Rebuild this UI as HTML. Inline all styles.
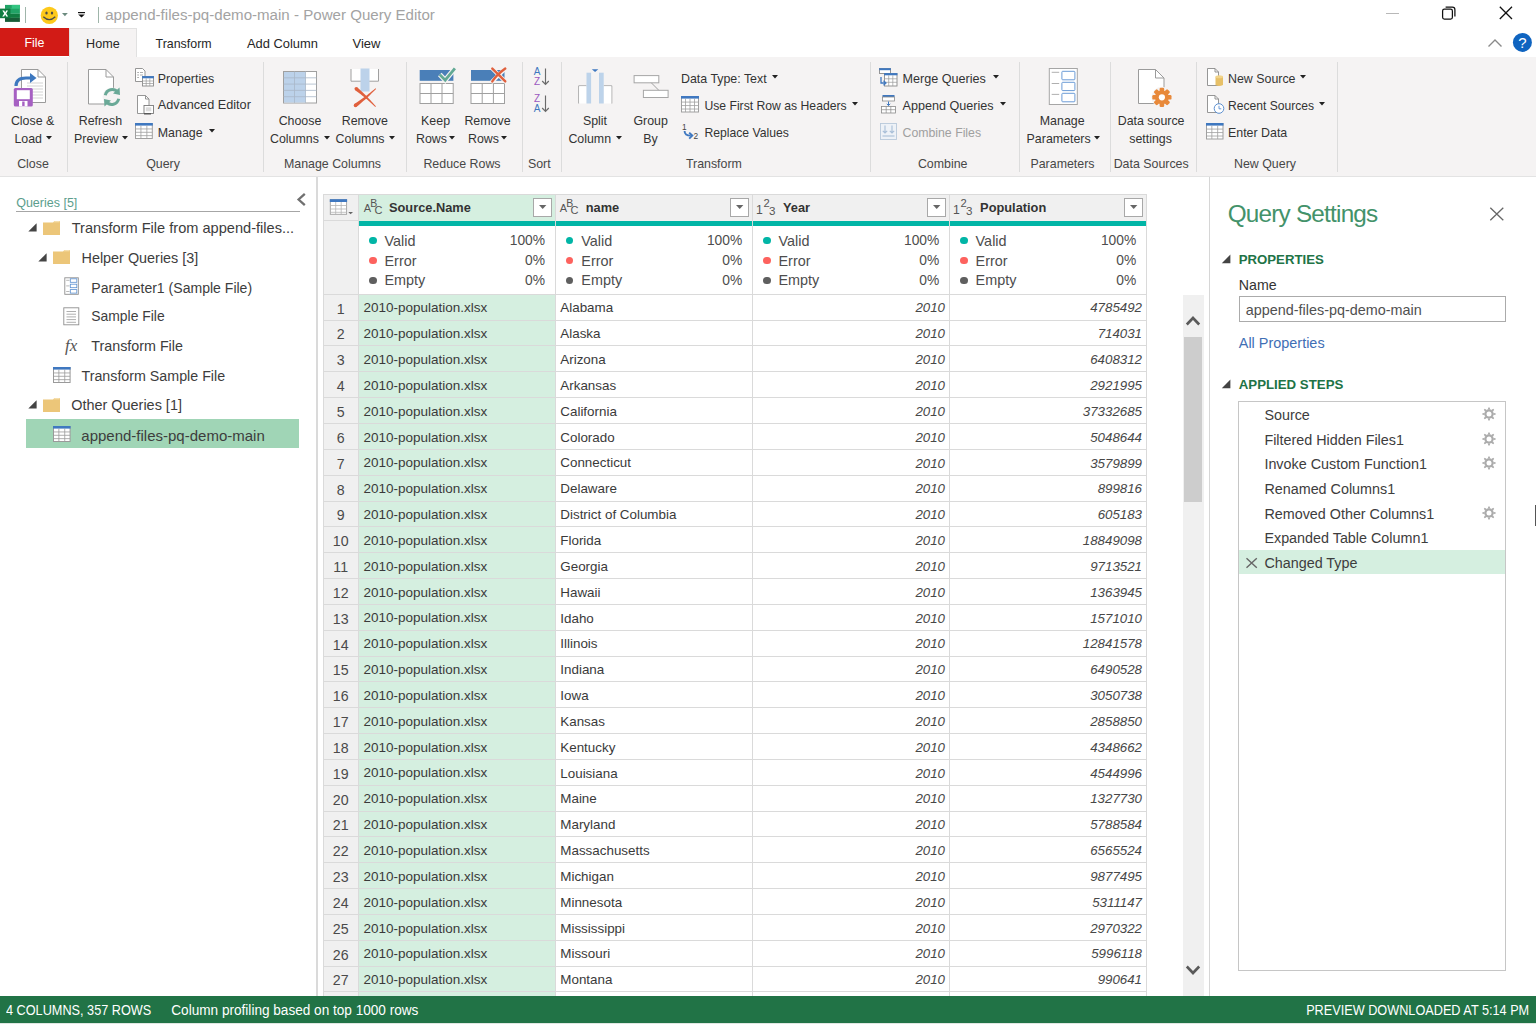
<!DOCTYPE html>
<html><head><meta charset="utf-8"><title>Power Query Editor</title>
<style>
html,body{margin:0;padding:0;width:1536px;height:1024px;overflow:hidden;background:#fff;}
body{position:relative;font-family:"Liberation Sans",sans-serif;}
.t{position:absolute;white-space:nowrap;line-height:1;}
.r{position:absolute;}
svg.r{overflow:visible;}
</style></head><body>
<div class="r" style="left:0px;top:0px;width:1536px;height:28px;background:#ffffff;"></div>
<svg class="r" style="left:0px;top:4px;" width="22" height="20" viewBox="0 0 22 20">
<rect x="5" y="0.9" width="14.9" height="4" fill="#21a366"/>
<rect x="11.7" y="0.9" width="8.2" height="4" fill="#33c481"/>
<rect x="5" y="4.8" width="14.9" height="5" fill="#21a366"/>
<rect x="5" y="9.8" width="14.9" height="4.1" fill="#107c41"/>
<rect x="5" y="13.9" width="14.9" height="4" fill="#185c37"/>
<rect x="0" y="4.6" width="10.5" height="9.6" fill="#107c41"/>
<path d="M2.3 6.4 L4.2 6.4 L5.2 8.4 L6.2 6.4 L8 6.4 L6.2 9.4 L8.1 12.5 L6.2 12.5 L5.2 10.5 L4.1 12.5 L2.2 12.5 L4.2 9.4 Z" fill="#fff"/>
</svg>
<div class="r" style="left:25px;top:6.5px;width:1.2px;height:16.5px;background:#9fb5aa;"></div>
<svg class="r" style="left:40px;top:6px;" width="20" height="20" viewBox="0 0 20 20">
<circle cx="9.3" cy="9.4" r="8.6" fill="#fdc91b"/>
<ellipse cx="6.5" cy="6.9" rx="1.2" ry="1.5" fill="#4a4a4a"/>
<ellipse cx="12" cy="6.9" rx="1.2" ry="1.5" fill="#4a4a4a"/>
<path d="M3.3 10.8 Q9.3 16.5 15.3 10.8" stroke="#4a4a4a" stroke-width="1.3" fill="none"/>
</svg>
<svg class="r" style="left:62.3px;top:12.9px;" width="5.8" height="3.2" viewBox="0 0 5.8 3.2"><path d="M0 0H5.8L2.9 3.2Z" fill="#6b8a7e"/></svg>
<svg class="r" style="left:77px;top:11px;" width="10" height="8" viewBox="0 0 10 8"><rect x="1" y="1" width="7" height="1.2" fill="#111"/><path d="M1.2 3.5H7.8L4.5 6.6Z" fill="#111"/></svg>
<div class="r" style="left:98px;top:6.5px;width:1.2px;height:16.5px;background:#9fb5aa;"></div>
<div class="t" style="left:105.20px;top:6.95px;font-size:15.1px;color:#a3a3a3;font-weight:normal;font-style:normal;">append-files-pq-demo-main - Power Query Editor</div>
<div class="r" style="left:1386px;top:12.6px;width:13px;height:1.2px;background:#b8b8b8;"></div>
<svg class="r" style="left:1441px;top:5px;" width="16" height="16" viewBox="0 0 16 16"><rect x="1.6" y="4.2" width="9.8" height="9.8" rx="1.8" fill="none" stroke="#111" stroke-width="1.25"/><path d="M4.6 2.2 H11.4 Q13.9 2.2 13.9 4.7 V11.4" fill="none" stroke="#111" stroke-width="1.25"/></svg>
<svg class="r" style="left:1498px;top:5px;" width="16" height="16" viewBox="0 0 16 16"><path d="M1.8 1.8 L14 14 M14 1.8 L1.8 14" stroke="#111" stroke-width="1.3"/></svg>
<div class="r" style="left:0px;top:28px;width:1536px;height:29px;background:#ffffff;"></div>
<div class="r" style="left:0px;top:56.5px;width:1536px;height:1px;background:#e1e1e1;"></div>
<div class="r" style="left:0px;top:28px;width:69px;height:28px;background:#d21b16;"></div>
<div class="t" style="left:4.50px;width:60px;text-align:center;top:37.30px;font-size:12.4px;color:#ffffff;font-weight:normal;font-style:normal;">File</div>
<div class="r" style="left:69px;top:28px;width:68px;height:30px;background:#f5f3f3;border:1px solid #e1e1e1;border-bottom:none;box-sizing:border-box"></div>
<div class="t" style="left:86.10px;top:37.50px;font-size:12.6px;color:#262626;font-weight:normal;font-style:normal;">Home</div>
<div class="t" style="left:155.60px;top:37.60px;font-size:12.4px;color:#262626;font-weight:normal;font-style:normal;">Transform</div>
<div class="t" style="left:247.00px;top:38.05px;font-size:12.9px;color:#262626;font-weight:normal;font-style:normal;">Add Column</div>
<div class="t" style="left:352.50px;top:36.80px;font-size:13px;color:#262626;font-weight:normal;font-style:normal;">View</div>
<svg class="r" style="left:1487px;top:38px;" width="16" height="10" viewBox="0 0 16 10"><path d="M1.5 8.5 L8 2 L14.5 8.5" stroke="#8a8a8a" stroke-width="1.4" fill="none"/></svg>
<svg class="r" style="left:1512px;top:32px;" width="21" height="21" viewBox="0 0 21 21"><circle cx="10.4" cy="10.4" r="9.5" fill="#0f64c0"/><text x="10.4" y="15.6" text-anchor="middle" font-family="Liberation Sans" font-size="15" fill="#fff">?</text></svg>
<div class="r" style="left:0px;top:57px;width:1536px;height:119px;background:#f5f3f3;"></div>
<div class="r" style="left:0px;top:175.5px;width:1536px;height:1px;background:#e3e3e3;"></div>
<div class="r" style="left:67px;top:61.5px;width:1px;height:110px;background:#dcdcdc;"></div>
<div class="r" style="left:263px;top:61.5px;width:1px;height:110px;background:#dcdcdc;"></div>
<div class="r" style="left:406px;top:61.5px;width:1px;height:110px;background:#dcdcdc;"></div>
<div class="r" style="left:521.7px;top:61.5px;width:1px;height:110px;background:#dcdcdc;"></div>
<div class="r" style="left:561.2px;top:61.5px;width:1px;height:110px;background:#dcdcdc;"></div>
<div class="r" style="left:870.2px;top:61.5px;width:1px;height:110px;background:#dcdcdc;"></div>
<div class="r" style="left:1019px;top:61.5px;width:1px;height:110px;background:#dcdcdc;"></div>
<div class="r" style="left:1110.3px;top:61.5px;width:1px;height:110px;background:#dcdcdc;"></div>
<div class="r" style="left:1196px;top:61.5px;width:1px;height:110px;background:#dcdcdc;"></div>
<div class="r" style="left:1337px;top:61.5px;width:1px;height:110px;background:#dcdcdc;"></div>
<div class="t" style="left:3.00px;width:60px;text-align:center;top:158.00px;font-size:12.4px;color:#474747;font-weight:normal;font-style:normal;">Close</div>
<div class="t" style="left:123.00px;width:80px;text-align:center;top:158.00px;font-size:12.4px;color:#474747;font-weight:normal;font-style:normal;">Query</div>
<div class="t" style="left:262.50px;width:140px;text-align:center;top:158.00px;font-size:12.4px;color:#474747;font-weight:normal;font-style:normal;">Manage Columns</div>
<div class="t" style="left:402.00px;width:120px;text-align:center;top:158.00px;font-size:12.4px;color:#474747;font-weight:normal;font-style:normal;">Reduce Rows</div>
<div class="t" style="left:519.30px;width:40px;text-align:center;top:158.00px;font-size:12.4px;color:#474747;font-weight:normal;font-style:normal;">Sort</div>
<div class="t" style="left:653.90px;width:120px;text-align:center;top:158.00px;font-size:12.4px;color:#474747;font-weight:normal;font-style:normal;">Transform</div>
<div class="t" style="left:882.70px;width:120px;text-align:center;top:158.00px;font-size:12.4px;color:#474747;font-weight:normal;font-style:normal;">Combine</div>
<div class="t" style="left:1017.50px;width:90px;text-align:center;top:158.00px;font-size:12.4px;color:#474747;font-weight:normal;font-style:normal;">Parameters</div>
<div class="t" style="left:1106.20px;width:90px;text-align:center;top:158.00px;font-size:12.4px;color:#474747;font-weight:normal;font-style:normal;">Data Sources</div>
<div class="t" style="left:1205.00px;width:120px;text-align:center;top:158.00px;font-size:12.4px;color:#474747;font-weight:normal;font-style:normal;">New Query</div>
<div class="t" style="left:2.60px;width:60px;text-align:center;top:115.20px;font-size:12.4px;color:#333333;font-weight:normal;font-style:normal;">Close &amp;</div>
<div class="t" style="left:14.40px;top:133.40px;font-size:12.4px;color:#333333;font-weight:normal;font-style:normal;">Load</div>
<svg class="r" style="left:46px;top:135.5px;" width="6" height="3.5" viewBox="0 0 6 3.5"><path d="M0 0H6L3.0 3.5Z" fill="#222"/></svg>
<div class="t" style="left:70.40px;width:60px;text-align:center;top:115.20px;font-size:12.4px;color:#333333;font-weight:normal;font-style:normal;">Refresh</div>
<div class="t" style="left:74.00px;top:133.40px;font-size:12.4px;color:#333333;font-weight:normal;font-style:normal;">Preview</div>
<svg class="r" style="left:121.5px;top:135.5px;" width="6" height="3.5" viewBox="0 0 6 3.5"><path d="M0 0H6L3.0 3.5Z" fill="#222"/></svg>
<div class="t" style="left:270.00px;width:60px;text-align:center;top:115.20px;font-size:12.4px;color:#333333;font-weight:normal;font-style:normal;">Choose</div>
<div class="t" style="left:270.00px;top:133.40px;font-size:12.4px;color:#333333;font-weight:normal;font-style:normal;">Columns</div>
<svg class="r" style="left:323.5px;top:135.5px;" width="6" height="3.5" viewBox="0 0 6 3.5"><path d="M0 0H6L3.0 3.5Z" fill="#222"/></svg>
<div class="t" style="left:334.80px;width:60px;text-align:center;top:115.20px;font-size:12.4px;color:#333333;font-weight:normal;font-style:normal;">Remove</div>
<div class="t" style="left:335.60px;top:133.40px;font-size:12.4px;color:#333333;font-weight:normal;font-style:normal;">Columns</div>
<svg class="r" style="left:389px;top:135.5px;" width="6" height="3.5" viewBox="0 0 6 3.5"><path d="M0 0H6L3.0 3.5Z" fill="#222"/></svg>
<div class="t" style="left:405.60px;width:60px;text-align:center;top:115.20px;font-size:12.4px;color:#333333;font-weight:normal;font-style:normal;">Keep</div>
<div class="t" style="left:416.00px;top:133.40px;font-size:12.4px;color:#333333;font-weight:normal;font-style:normal;">Rows</div>
<svg class="r" style="left:449px;top:135.5px;" width="6" height="3.5" viewBox="0 0 6 3.5"><path d="M0 0H6L3.0 3.5Z" fill="#222"/></svg>
<div class="t" style="left:457.50px;width:60px;text-align:center;top:115.20px;font-size:12.4px;color:#333333;font-weight:normal;font-style:normal;">Remove</div>
<div class="t" style="left:468.00px;top:133.40px;font-size:12.4px;color:#333333;font-weight:normal;font-style:normal;">Rows</div>
<svg class="r" style="left:501px;top:135.5px;" width="6" height="3.5" viewBox="0 0 6 3.5"><path d="M0 0H6L3.0 3.5Z" fill="#222"/></svg>
<div class="t" style="left:565.00px;width:60px;text-align:center;top:115.20px;font-size:12.4px;color:#333333;font-weight:normal;font-style:normal;">Split</div>
<div class="t" style="left:568.40px;top:133.40px;font-size:12.4px;color:#333333;font-weight:normal;font-style:normal;">Column</div>
<svg class="r" style="left:615.5px;top:135.5px;" width="6" height="3.5" viewBox="0 0 6 3.5"><path d="M0 0H6L3.0 3.5Z" fill="#222"/></svg>
<div class="t" style="left:620.60px;width:60px;text-align:center;top:115.20px;font-size:12.4px;color:#333333;font-weight:normal;font-style:normal;">Group</div>
<div class="t" style="left:620.40px;width:60px;text-align:center;top:133.40px;font-size:12.4px;color:#333333;font-weight:normal;font-style:normal;">By</div>
<div class="t" style="left:1022.20px;width:80px;text-align:center;top:115.20px;font-size:12.4px;color:#333333;font-weight:normal;font-style:normal;">Manage</div>
<div class="t" style="left:1026.60px;top:133.40px;font-size:12.4px;color:#333333;font-weight:normal;font-style:normal;">Parameters</div>
<svg class="r" style="left:1093.5px;top:135.5px;" width="6" height="3.5" viewBox="0 0 6 3.5"><path d="M0 0H6L3.0 3.5Z" fill="#222"/></svg>
<div class="t" style="left:1106.10px;width:90px;text-align:center;top:115.20px;font-size:12.4px;color:#333333;font-weight:normal;font-style:normal;">Data source</div>
<div class="t" style="left:1105.60px;width:90px;text-align:center;top:133.40px;font-size:12.4px;color:#333333;font-weight:normal;font-style:normal;">settings</div>
<div class="t" style="left:157.80px;top:72.60px;font-size:12.4px;color:#333333;font-weight:normal;font-style:normal;">Properties</div>
<div class="t" style="left:157.80px;top:99.45px;font-size:12.7px;color:#333333;font-weight:normal;font-style:normal;">Advanced Editor</div>
<div class="t" style="left:157.80px;top:126.60px;font-size:12.4px;color:#333333;font-weight:normal;font-style:normal;">Manage</div>
<svg class="r" style="left:209px;top:129px;" width="6" height="3.5" viewBox="0 0 6 3.5"><path d="M0 0H6L3.0 3.5Z" fill="#222"/></svg>
<div class="t" style="left:681.00px;top:72.60px;font-size:12.4px;color:#333333;font-weight:normal;font-style:normal;">Data Type: Text</div>
<svg class="r" style="left:771.5px;top:74.5px;" width="6" height="3.5" viewBox="0 0 6 3.5"><path d="M0 0H6L3.0 3.5Z" fill="#222"/></svg>
<div class="t" style="left:704.40px;top:99.70px;font-size:12.2px;color:#333333;font-weight:normal;font-style:normal;">Use First Row as Headers</div>
<svg class="r" style="left:851.5px;top:101.5px;" width="6" height="3.5" viewBox="0 0 6 3.5"><path d="M0 0H6L3.0 3.5Z" fill="#222"/></svg>
<div class="t" style="left:704.40px;top:126.70px;font-size:12.2px;color:#333333;font-weight:normal;font-style:normal;">Replace Values</div>
<div class="t" style="left:902.50px;top:72.50px;font-size:12.6px;color:#333333;font-weight:normal;font-style:normal;">Merge Queries</div>
<svg class="r" style="left:992.5px;top:74.5px;" width="6" height="3.5" viewBox="0 0 6 3.5"><path d="M0 0H6L3.0 3.5Z" fill="#222"/></svg>
<div class="t" style="left:902.50px;top:99.50px;font-size:12.6px;color:#333333;font-weight:normal;font-style:normal;">Append Queries</div>
<svg class="r" style="left:1000px;top:101.5px;" width="6" height="3.5" viewBox="0 0 6 3.5"><path d="M0 0H6L3.0 3.5Z" fill="#222"/></svg>
<div class="t" style="left:902.50px;top:126.65px;font-size:12.3px;color:#a0a0a0;font-weight:normal;font-style:normal;">Combine Files</div>
<div class="t" style="left:1228.00px;top:72.60px;font-size:12.4px;color:#333333;font-weight:normal;font-style:normal;">New Source</div>
<svg class="r" style="left:1300px;top:74.5px;" width="6" height="3.5" viewBox="0 0 6 3.5"><path d="M0 0H6L3.0 3.5Z" fill="#222"/></svg>
<div class="t" style="left:1228.00px;top:99.75px;font-size:12.1px;color:#333333;font-weight:normal;font-style:normal;">Recent Sources</div>
<svg class="r" style="left:1319px;top:101.5px;" width="6" height="3.5" viewBox="0 0 6 3.5"><path d="M0 0H6L3.0 3.5Z" fill="#222"/></svg>
<div class="t" style="left:1228.00px;top:126.60px;font-size:12.4px;color:#333333;font-weight:normal;font-style:normal;">Enter Data</div>
<svg class="r" style="left:13px;top:68px" width="36" height="40" viewBox="0 0 36 40">
<path d="M8.5 1.5 H25 L32.5 9 V34.5 H8.5 Z" fill="#fff" stroke="#9b9b9b" stroke-width="1"/>
<path d="M25 1.5 V9 H32.5" fill="none" stroke="#9b9b9b" stroke-width="1"/>
<path d="M14 15H30M14 18H30M14 21H30M14 24H30M14 27H30M14 30H30" stroke="#c8c8c8" stroke-width="0.8"/>
<path d="M3 18 Q3 10 13 10 L19 10" stroke="#3d78bf" stroke-width="3.2" fill="none"/>
<path d="M17 5 L23.5 10 L17 15 Z" fill="#3d78bf"/>
<rect x="0.8" y="20" width="19" height="18.5" rx="1.6" fill="#a660c2"/>
<rect x="3.8" y="22.2" width="13" height="9" fill="#fff"/>
<rect x="6" y="33" width="8.5" height="5.5" fill="#fff"/>
<rect x="9.2" y="33.5" width="2.4" height="4.5" fill="#a660c2"/>
</svg>
<svg class="r" style="left:86px;top:68px" width="38" height="40" viewBox="0 0 38 40">
<path d="M2.5 1.5 H20 L27.5 9 V36 H2.5 Z" fill="#fff" stroke="#9b9b9b" stroke-width="1"/>
<path d="M20 1.5 V9 H27.5" fill="none" stroke="#9b9b9b" stroke-width="1"/>
<circle cx="26" cy="29" r="9.5" fill="#f5f3f3"/>
<path d="M19.3 27.2 A7 7 0 0 1 31.6 24.2" stroke="#6aa997" stroke-width="3" fill="none"/>
<path d="M33.5 19.5 L34 27 L27 25.5 Z" fill="#6aa997"/>
<path d="M32.7 30.8 A7 7 0 0 1 20.4 33.8" stroke="#6aa997" stroke-width="3" fill="none"/>
<path d="M18.5 38.5 L18 31 L25 32.5 Z" fill="#6aa997"/>
</svg>
<svg class="r" style="left:134px;top:67px" width="21" height="21" viewBox="0 0 21 21">
<path d="M1.5 1.5 H8.5 L11 4 V14.5 H1.5 Z" fill="#fff" stroke="#8a8a8a" stroke-width="0.9"/>
<path d="M3.2 5.5H5M3.2 8H5M3.2 10.5H5M6 5.5H9M6 8H9" stroke="#9a9a9a" stroke-width="0.8"/>
<rect x="8.5" y="9.5" width="11" height="9.5" fill="#fff" stroke="#8a8a8a" stroke-width="0.9"/>
<rect x="8.1" y="9.1" width="11.8" height="2.2" fill="#3f78c0"/>
<path d="M8.5 14H19.5M8.5 16.5H19.5M12.2 11.3V19M15.8 11.3V19" stroke="#9a9a9a" stroke-width="0.7"/>
</svg>
<svg class="r" style="left:135px;top:94px" width="21" height="22" viewBox="0 0 21 22">
<path d="M2.5 1.5 H10.5 L14 5 V19.5 H2.5 Z" fill="#fff" stroke="#8a8a8a" stroke-width="0.9"/>
<path d="M10.5 1.5 V5 H14" fill="none" stroke="#8a8a8a" stroke-width="0.9"/>
<rect x="9" y="11.5" width="9.5" height="8" fill="#fff" stroke="#7a7a7a" stroke-width="0.9"/>
<rect x="10.8" y="13.3" width="5.5" height="4" fill="#dcdcdc"/>
<path d="M9 19.8 H16" stroke="#555" stroke-width="1.4"/>
</svg>
<svg class="r" style="left:134.8px;top:122.8px" width="17.8" height="16" viewBox="0 0 17.8 16"><rect x="0.5" y="0.5" width="16.8" height="15" fill="#fff" stroke="#a0a0a0" stroke-width="1"/><rect x="0" y="0" width="17.8" height="2.6" fill="#3f78c0"/><path d="M0.5 5.95H17.3" stroke="#a0a0a0" stroke-width="0.8"/><path d="M0.5 9.30H17.3" stroke="#a0a0a0" stroke-width="0.8"/><path d="M0.5 12.65H17.3" stroke="#a0a0a0" stroke-width="0.8"/><path d="M5.93 2.6V15.5" stroke="#a0a0a0" stroke-width="0.8"/><path d="M11.87 2.6V15.5" stroke="#a0a0a0" stroke-width="0.8"/></svg>
<svg class="r" style="left:283px;top:71px" width="34" height="33" viewBox="0 0 34 33"><rect x="0.5" y="0.5" width="33" height="31.5" fill="#fff" stroke="#a0a0a0" stroke-width="1"/><rect x="1" y="1" width="21.5" height="30.5" fill="#bcd2ea"/><path d="M0.5 6.80H33.5" stroke="#a9b8c8" stroke-width="0.8"/><path d="M0.5 13.10H33.5" stroke="#a9b8c8" stroke-width="0.8"/><path d="M0.5 19.40H33.5" stroke="#a9b8c8" stroke-width="0.8"/><path d="M0.5 25.70H33.5" stroke="#a9b8c8" stroke-width="0.8"/><path d="M11.5 0.5V32M22.5 0.5V32" stroke="#a9b8c8" stroke-width="0.8"/></svg>
<svg class="r" style="left:350px;top:68px" width="30" height="40" viewBox="0 0 30 40">
<path d="M1 1 V13.2 H28.5 V1" fill="#fff" stroke="#a0a0a0" stroke-width="1"/>
<rect x="10.5" y="0.5" width="9" height="23" fill="#bcd2ea"/>
<path d="M5.16 22.19 L6.91 23.49 L8.65 24.80 L10.38 26.12 L12.09 27.47 L13.79 28.83 L15.48 30.21 L17.15 31.61 L18.81 33.03 L20.45 34.47 L22.09 35.92 L23.71 37.39 L25.31 38.88 L25.89 38.32 L24.44 36.67 L22.98 35.02 L21.50 33.39 L20.01 31.78 L18.50 30.18 L16.97 28.60 L15.42 27.03 L13.86 25.47 L12.28 23.93 L10.68 22.41 L9.07 20.90 L7.44 19.41Z" fill="#e0603d"/><circle cx="6.3" cy="20.8" r="1.8" fill="#e0603d"/><path d="M6.56 38.85 L8.28 37.44 L9.97 36.02 L11.66 34.58 L13.32 33.12 L14.97 31.64 L16.61 30.16 L18.22 28.65 L19.83 27.13 L21.41 25.59 L22.98 24.04 L24.54 22.48 L26.07 20.89 L25.53 20.31 L23.84 21.71 L22.14 23.10 L20.42 24.47 L18.69 25.82 L16.96 27.15 L15.20 28.46 L13.44 29.75 L11.66 31.03 L9.88 32.29 L8.08 33.52 L6.26 34.74 L4.44 35.95Z" fill="#e0603d"/><circle cx="5.5" cy="37.4" r="1.8" fill="#e0603d"/>
</svg>
<svg class="r" style="left:418.5px;top:66px" width="40" height="40" viewBox="0 0 40 40">
<rect x="0.7" y="4" width="33.7" height="10.8" fill="#4a7fb8"/>
<rect x="1" y="17.5" width="33.2" height="20" fill="#fff" stroke="#a0a0a0" stroke-width="1"/>
<path d="M1 27.5H34.2M12 17.5V37.5M23 17.5V37.5" stroke="#a0a0a0" stroke-width="1"/>
<path d="M20.8 8.6 L26.2 14.2 L35.9 2.4" stroke="#f5f3f3" stroke-width="5" fill="none"/>
<path d="M20.8 8.6 L26.2 14.2 L35.9 2.4" stroke="#62a994" stroke-width="2.8" fill="none"/>
</svg>
<svg class="r" style="left:470px;top:66px" width="40" height="40" viewBox="0 0 40 40">
<rect x="1" y="4" width="33.5" height="10.8" fill="#4a7fb8"/>
<rect x="1" y="17.5" width="33.5" height="20" fill="#fff" stroke="#a0a0a0" stroke-width="1"/>
<path d="M1 27.5H34.5M12.2 17.5V37.5M23.4 17.5V37.5" stroke="#a0a0a0" stroke-width="1"/>
<path d="M22.3 2.6 L35.3 15.4 M35.3 2.6 L22.3 15.4" stroke="#f5f3f3" stroke-width="4.2" stroke-linecap="round"/>
<path d="M22.3 2.6 Q28 8 35.3 15.4 M35.3 2.6 Q27 8.5 22.3 15.4" stroke="#e0603d" stroke-width="2.4" stroke-linecap="round" fill="none"/>
</svg>
<svg class="r" style="left:532px;top:67px" width="20" height="20" viewBox="0 0 20 20"><text x="5" y="8.2" text-anchor="middle" font-family="Liberation Sans" font-size="10" fill="#3f78c0">A</text><text x="5" y="17.6" text-anchor="middle" font-family="Liberation Sans" font-size="10" fill="#9b59c0">Z</text><path d="M13.5 1.5V17.5M10.2 14L13.5 17.5L16.8 14" stroke="#6a6a6a" stroke-width="1.15" fill="none"/></svg>
<svg class="r" style="left:532px;top:94px" width="20" height="20" viewBox="0 0 20 20"><text x="5" y="8.2" text-anchor="middle" font-family="Liberation Sans" font-size="10" fill="#9b59c0">Z</text><text x="5" y="17.6" text-anchor="middle" font-family="Liberation Sans" font-size="10" fill="#3f78c0">A</text><path d="M13.5 1.5V17.5M10.2 14L13.5 17.5L16.8 14" stroke="#6a6a6a" stroke-width="1.15" fill="none"/></svg>
<svg class="r" style="left:576px;top:68px" width="38" height="38" viewBox="0 0 38 38">
<path d="M2.7 35.5 V17.8 H10.5 M27.7 17.8 H35.8 V35.5" fill="#fff" stroke="#a6a6a6" stroke-width="1"/>
<rect x="3.2" y="18.3" width="7.3" height="17.2" fill="#fff"/>
<rect x="27.7" y="18.3" width="7.6" height="17.2" fill="#fff"/>
<rect x="10.5" y="4.7" width="4.6" height="30.8" fill="#bdd3ea"/>
<rect x="23" y="4.7" width="4.7" height="30.8" fill="#bdd3ea"/>
<path d="M15.8 1.2 H22.3 L19.05 4 Z" fill="#3f78c0"/>
</svg>
<svg class="r" style="left:632px;top:74px" width="38" height="26" viewBox="0 0 38 26">
<rect x="2.1" y="1.6" width="24.7" height="7.2" fill="#fff" stroke="#a6a6a6" stroke-width="1"/>
<rect x="11.4" y="16.3" width="24.7" height="7.2" fill="#fff" stroke="#a6a6a6" stroke-width="1"/>
<path d="M19.3 8.8 L26.8 16.3" stroke="#a0a0a0" stroke-width="1"/>
</svg>
<svg class="r" style="left:681px;top:95.5px" width="18" height="16.5" viewBox="0 0 18 16.5"><rect x="0.5" y="0.5" width="17" height="15.5" fill="#fff" stroke="#a0a0a0" stroke-width="1"/><rect x="0" y="0" width="18" height="2.6" fill="#3f78c0"/><path d="M0.5 6.08H17.5" stroke="#a0a0a0" stroke-width="0.8"/><path d="M0.5 9.55H17.5" stroke="#a0a0a0" stroke-width="0.8"/><path d="M0.5 13.03H17.5" stroke="#a0a0a0" stroke-width="0.8"/><path d="M4.50 2.6V16.0" stroke="#a0a0a0" stroke-width="0.8"/><path d="M9.00 2.6V16.0" stroke="#a0a0a0" stroke-width="0.8"/><path d="M13.50 2.6V16.0" stroke="#a0a0a0" stroke-width="0.8"/></svg>
<svg class="r" style="left:681px;top:121px" width="20" height="20" viewBox="0 0 20 20">
<text x="1" y="8.6" font-family="Liberation Sans" font-size="8.3" fill="#444">1</text>
<text x="12.6" y="17.8" font-family="Liberation Sans" font-size="8.3" fill="#444">2</text>
<path d="M3.6 10 Q3.4 14.6 9.8 14.6" stroke="#3f78c0" stroke-width="1.9" fill="none"/>
<path d="M8.2 11.6 L11.3 14.6 L8.2 17.6" stroke="#3f78c0" stroke-width="1.9" fill="none"/>
</svg>
<svg class="r" style="left:878px;top:67px" width="21" height="21" viewBox="0 0 21 21">
<rect x="1.5" y="1.5" width="11" height="5" fill="#fff" stroke="#8a8a8a" stroke-width="0.9"/>
<rect x="1.2" y="1.2" width="11.6" height="2" fill="#3f78c0"/>
<rect x="6.5" y="6.5" width="12.5" height="12.5" fill="#fff" stroke="#8a8a8a" stroke-width="0.9"/>
<rect x="6.1" y="6.1" width="13.3" height="2.2" fill="#3f78c0"/>
<path d="M6.5 11.8H19M6.5 15.3H19M10.7 8.3V19M14.8 8.3V19" stroke="#9a9a9a" stroke-width="0.7"/>
<path d="M3 10 V16 H7" stroke="#3f78c0" stroke-width="1.3" fill="none"/>
<path d="M5.5 13.8 L8 16 L5.5 18.2" stroke="#3f78c0" stroke-width="1.2" fill="none"/>
</svg>
<svg class="r" style="left:880px;top:94px" width="18" height="20" viewBox="0 0 18 20">
<rect x="2.5" y="1" width="12" height="2.2" fill="#3f78c0"/>
<rect x="2.5" y="3" width="12" height="4" fill="#fff" stroke="#8a8a8a" stroke-width="0.8"/>
<path d="M8.5 7.5 V11.5 M6.8 9.8 L8.5 11.6 L10.2 9.8" stroke="#3f78c0" stroke-width="1" fill="none"/>
<rect x="1.5" y="12.5" width="14" height="6.5" fill="#fff" stroke="#8a8a8a" stroke-width="0.8"/>
<path d="M1.5 15.7H15.5M6.2 12.5V19M10.8 12.5V19" stroke="#8a8a8a" stroke-width="0.7"/>
</svg>
<svg class="r" style="left:879px;top:122px" width="20" height="19" viewBox="0 0 20 19">
<rect x="1.5" y="1.5" width="16" height="16" fill="#eef2f7" stroke="#b9c9db" stroke-width="0.9"/>
<path d="M6 3.5 V11 M3.8 8.8 L6 11 L8.2 8.8 M13 3.5 V11 M10.8 8.8 L13 11 L15.2 8.8" stroke="#a9bfd8" stroke-width="1.1" fill="none"/>
<path d="M3.5 14H15.5" stroke="#a9bfd8" stroke-width="1.1"/>
</svg>
<svg class="r" style="left:1047.5px;top:67px" width="31" height="39" viewBox="0 0 31 39">
<rect x="1.3" y="1.5" width="28" height="36" fill="#fff" stroke="#a6a6a6" stroke-width="1"/>
<path d="M3.7 5.3H11.2M3.7 16.5H11.2M3.7 27.4H11.2" stroke="#a6a6a6" stroke-width="0.9"/>
<rect x="13.9" y="4.3" width="13" height="8.5" rx="0.8" fill="#fff" stroke="#6b9bd6" stroke-width="1"/>
<rect x="13.9" y="15.3" width="13" height="8.3" rx="0.8" fill="#fff" stroke="#6b9bd6" stroke-width="1"/>
<rect x="13.9" y="26.3" width="13" height="8.5" rx="0.8" fill="#fff" stroke="#6b9bd6" stroke-width="1"/>
</svg>
<svg class="r" style="left:1137px;top:68px" width="36" height="40" viewBox="0 0 36 40">
<path d="M1.5 1.5 H18.5 L27 10 V35.5 H1.5 Z" fill="#fff" stroke="#9b9b9b" stroke-width="1"/>
<path d="M18.5 1.5 V10 H27" fill="none" stroke="#9b9b9b" stroke-width="1"/>
<circle cx="24.9" cy="29.3" r="10.5" fill="#f5f3f3"/>
<rect x="22.599999999999998" y="19.700000000000003" width="4.6" height="5" rx="1.2" transform="rotate(0 24.9 29.3)" fill="#e8893a"/><rect x="22.599999999999998" y="19.700000000000003" width="4.6" height="5" rx="1.2" transform="rotate(45 24.9 29.3)" fill="#e8893a"/><rect x="22.599999999999998" y="19.700000000000003" width="4.6" height="5" rx="1.2" transform="rotate(90 24.9 29.3)" fill="#e8893a"/><rect x="22.599999999999998" y="19.700000000000003" width="4.6" height="5" rx="1.2" transform="rotate(135 24.9 29.3)" fill="#e8893a"/><rect x="22.599999999999998" y="19.700000000000003" width="4.6" height="5" rx="1.2" transform="rotate(180 24.9 29.3)" fill="#e8893a"/><rect x="22.599999999999998" y="19.700000000000003" width="4.6" height="5" rx="1.2" transform="rotate(225 24.9 29.3)" fill="#e8893a"/><rect x="22.599999999999998" y="19.700000000000003" width="4.6" height="5" rx="1.2" transform="rotate(270 24.9 29.3)" fill="#e8893a"/><rect x="22.599999999999998" y="19.700000000000003" width="4.6" height="5" rx="1.2" transform="rotate(315 24.9 29.3)" fill="#e8893a"/>
<circle cx="24.9" cy="29.3" r="6.9" fill="#e8893a"/>
<circle cx="24.9" cy="29.3" r="3.1" fill="#fff"/>
</svg>
<svg class="r" style="left:1206px;top:67px" width="20" height="21" viewBox="0 0 20 21">
<path d="M1.5 1.5 H9 L12.5 5 V18.5 H1.5 Z" fill="#fff" stroke="#8a8a8a" stroke-width="0.9"/>
<path d="M9 1.5 V5 H12.5" fill="none" stroke="#8a8a8a" stroke-width="0.9"/>
<path d="M9.5 9.8 V18 Q13.2 20.2 17 18 V9.8 Z" fill="#e7c067"/>
<ellipse cx="13.25" cy="9.8" rx="3.75" ry="1.5" fill="#f2d48a"/>
</svg>
<svg class="r" style="left:1206px;top:94px" width="20" height="21" viewBox="0 0 20 21">
<path d="M1.5 1.5 H9 L12.5 5 V18.5 H1.5 Z" fill="#fff" stroke="#8a8a8a" stroke-width="0.9"/>
<path d="M9 1.5 V5 H12.5" fill="none" stroke="#8a8a8a" stroke-width="0.9"/>
<circle cx="13" cy="14.5" r="4.8" fill="#fff" stroke="#5b8fd0" stroke-width="1"/>
<path d="M13 11.8 V14.8 H15.3" stroke="#5b8fd0" stroke-width="0.9" fill="none"/>
</svg>
<svg class="r" style="left:1205.5px;top:122.5px" width="17.5" height="16.5" viewBox="0 0 17.5 16.5"><rect x="0.5" y="0.5" width="16.5" height="15.5" fill="#fff" stroke="#a0a0a0" stroke-width="1"/><rect x="0" y="0" width="17.5" height="2.6" fill="#3f78c0"/><path d="M0.5 6.08H17.0" stroke="#a0a0a0" stroke-width="0.8"/><path d="M0.5 9.55H17.0" stroke="#a0a0a0" stroke-width="0.8"/><path d="M0.5 13.03H17.0" stroke="#a0a0a0" stroke-width="0.8"/><path d="M5.83 2.6V16.0" stroke="#a0a0a0" stroke-width="0.8"/><path d="M11.67 2.6V16.0" stroke="#a0a0a0" stroke-width="0.8"/></svg>
<div class="r" style="left:0px;top:176.5px;width:317px;height:819.5px;background:#ffffff;"></div>
<div class="r" style="left:316.2px;top:176.5px;width:1.5px;height:819.5px;background:#dadada;"></div>
<div class="t" style="left:16.20px;top:196.65px;font-size:12.5px;color:#5b9e8c;font-weight:normal;font-style:normal;">Queries [5]</div>
<div class="r" style="left:16px;top:211px;width:284px;height:1.2px;background:#a6a6a6;"></div>
<svg class="r" style="left:294px;top:192px;" width="14" height="16" viewBox="0 0 14 16"><path d="M10.8 1.8 L4.6 7.5 L10.8 13.2" stroke="#707070" stroke-width="2.3" fill="none"/></svg>
<div class="r" style="left:26px;top:419.4px;width:273px;height:29px;background:#a0d5b6;"></div>
<div class="t" style="left:71.70px;top:221.00px;font-size:14.6px;color:#3d3d3d;font-weight:normal;font-style:normal;">Transform File from append-files...</div>
<div class="t" style="left:81.50px;top:250.50px;font-size:14.4px;color:#3d3d3d;font-weight:normal;font-style:normal;">Helper Queries [3]</div>
<div class="t" style="left:91.30px;top:280.87px;font-size:14.06px;color:#3d3d3d;font-weight:normal;font-style:normal;">Parameter1 (Sample File)</div>
<div class="t" style="left:91.30px;top:310.25px;font-size:13.9px;color:#3d3d3d;font-weight:normal;font-style:normal;">Sample File</div>
<div class="t" style="left:91.30px;top:339.35px;font-size:14.3px;color:#3d3d3d;font-weight:normal;font-style:normal;">Transform File</div>
<div class="t" style="left:81.50px;top:368.68px;font-size:14.25px;color:#3d3d3d;font-weight:normal;font-style:normal;">Transform Sample File</div>
<div class="t" style="left:71.20px;top:398.27px;font-size:14.45px;color:#3d3d3d;font-weight:normal;font-style:normal;">Other Queries [1]</div>
<div class="t" style="left:81.30px;top:427.80px;font-size:15.0px;color:#3d3d3d;font-weight:normal;font-style:normal;">append-files-pq-demo-main</div>
<div class="r" style="left:317.7px;top:176.5px;width:891.5px;height:819.5px;background:#ffffff;"></div>
<div class="r" style="left:323px;top:194.2px;width:35.5px;height:100.10000000000002px;background:#f0f0f0;"></div>
<div class="r" style="left:358.5px;top:194.2px;width:196.79999999999995px;height:26.400000000000006px;background:#d5efe0;"></div>
<div class="r" style="left:555.3px;top:194.2px;width:197.20000000000005px;height:26.400000000000006px;background:#f0f0f0;"></div>
<div class="r" style="left:752.5px;top:194.2px;width:197.10000000000002px;height:26.400000000000006px;background:#f0f0f0;"></div>
<div class="r" style="left:949.6px;top:194.2px;width:196.89999999999998px;height:26.400000000000006px;background:#f0f0f0;"></div>
<div class="r" style="left:359.0px;top:220.6px;width:196.29999999999995px;height:5.400000000000006px;background:#01b5a6;"></div>
<div class="r" style="left:555.8px;top:220.6px;width:196.70000000000005px;height:5.400000000000006px;background:#01b5a6;"></div>
<div class="r" style="left:753.0px;top:220.6px;width:196.60000000000002px;height:5.400000000000006px;background:#01b5a6;"></div>
<div class="r" style="left:950.1px;top:220.6px;width:196.39999999999998px;height:5.400000000000006px;background:#01b5a6;"></div>
<div class="r" style="left:323px;top:294.3px;width:35.5px;height:701.7px;background:#f0f0f0;"></div>
<div class="r" style="left:358.5px;top:294.3px;width:196.79999999999995px;height:701.7px;background:#d5efe0;"></div>
<div class="r" style="left:322.5px;top:194.2px;width:1px;height:801.8px;background:#dadada;"></div>
<div class="r" style="left:323px;top:193.7px;width:823.5px;height:1px;background:#dadada;"></div>
<div class="r" style="left:358.0px;top:194.2px;width:1px;height:801.8px;background:#dadada;"></div>
<div class="r" style="left:554.8px;top:194.2px;width:1px;height:801.8px;background:#dadada;"></div>
<div class="r" style="left:752.0px;top:194.2px;width:1px;height:801.8px;background:#dadada;"></div>
<div class="r" style="left:949.1px;top:194.2px;width:1px;height:801.8px;background:#dadada;"></div>
<div class="r" style="left:1146.0px;top:194.2px;width:1px;height:801.8px;background:#dadada;"></div>
<div class="r" style="left:323px;top:220.1px;width:35.5px;height:1px;background:#dadada;"></div>
<div class="r" style="left:323px;top:293.8px;width:823.5px;height:1px;background:#dadada;"></div>
<div class="r" style="left:323px;top:319.64px;width:823.5px;height:1px;background:#dadada;"></div>
<div class="r" style="left:323px;top:345.48px;width:823.5px;height:1px;background:#dadada;"></div>
<div class="r" style="left:323px;top:371.32px;width:823.5px;height:1px;background:#dadada;"></div>
<div class="r" style="left:323px;top:397.16px;width:823.5px;height:1px;background:#dadada;"></div>
<div class="r" style="left:323px;top:423.0px;width:823.5px;height:1px;background:#dadada;"></div>
<div class="r" style="left:323px;top:448.84px;width:823.5px;height:1px;background:#dadada;"></div>
<div class="r" style="left:323px;top:474.68px;width:823.5px;height:1px;background:#dadada;"></div>
<div class="r" style="left:323px;top:500.52px;width:823.5px;height:1px;background:#dadada;"></div>
<div class="r" style="left:323px;top:526.36px;width:823.5px;height:1px;background:#dadada;"></div>
<div class="r" style="left:323px;top:552.2px;width:823.5px;height:1px;background:#dadada;"></div>
<div class="r" style="left:323px;top:578.04px;width:823.5px;height:1px;background:#dadada;"></div>
<div class="r" style="left:323px;top:603.88px;width:823.5px;height:1px;background:#dadada;"></div>
<div class="r" style="left:323px;top:629.72px;width:823.5px;height:1px;background:#dadada;"></div>
<div class="r" style="left:323px;top:655.56px;width:823.5px;height:1px;background:#dadada;"></div>
<div class="r" style="left:323px;top:681.4px;width:823.5px;height:1px;background:#dadada;"></div>
<div class="r" style="left:323px;top:707.24px;width:823.5px;height:1px;background:#dadada;"></div>
<div class="r" style="left:323px;top:733.08px;width:823.5px;height:1px;background:#dadada;"></div>
<div class="r" style="left:323px;top:758.92px;width:823.5px;height:1px;background:#dadada;"></div>
<div class="r" style="left:323px;top:784.76px;width:823.5px;height:1px;background:#dadada;"></div>
<div class="r" style="left:323px;top:810.6px;width:823.5px;height:1px;background:#dadada;"></div>
<div class="r" style="left:323px;top:836.44px;width:823.5px;height:1px;background:#dadada;"></div>
<div class="r" style="left:323px;top:862.28px;width:823.5px;height:1px;background:#dadada;"></div>
<div class="r" style="left:323px;top:888.12px;width:823.5px;height:1px;background:#dadada;"></div>
<div class="r" style="left:323px;top:913.96px;width:823.5px;height:1px;background:#dadada;"></div>
<div class="r" style="left:323px;top:939.8px;width:823.5px;height:1px;background:#dadada;"></div>
<div class="r" style="left:323px;top:965.64px;width:823.5px;height:1px;background:#dadada;"></div>
<div class="r" style="left:323px;top:991.48px;width:823.5px;height:1px;background:#dadada;"></div>
<svg class="r" style="left:329px;top:198px;" width="26" height="19" viewBox="0 0 26 19">
<rect x="1.3" y="1.7" width="16.3" height="14.6" fill="#fff" stroke="#a0a0a0" stroke-width="0.9"/>
<rect x="0.8" y="1.2" width="17.3" height="2.8" fill="#3f78c0"/>
<path d="M1.3 7.5H17.6M1.3 11H17.6M1.3 14.3H17.6M6.7 4V16.3M12.2 4V16.3" stroke="#b5b5b5" stroke-width="0.8"/>
<path d="M19.3 14 H24 L21.65 16.3 Z" fill="#666"/>
</svg>
<svg class="r" style="left:362.5px;top:196px" width="24" height="22" viewBox="0 0 24 22"><g font-family="Liberation Sans" font-size="11" fill="#555"><text x="0.8" y="16">A</text><text x="7.2" y="11.3" font-size="10.5">B</text><text x="11.6" y="18.4">C</text></g></svg>
<div class="t" style="left:389.00px;top:201.90px;font-size:12.8px;color:#333;font-weight:bold;font-style:normal;">Source.Name</div>
<div class="r" style="left:533.1px;top:198px;width:19px;height:18.8px;background:#fff;border:1px solid #a8a8a8;box-sizing:border-box"></div>
<svg class="r" style="left:538.5px;top:205.3px;" width="7.4" height="4" viewBox="0 0 7.4 4"><path d="M0 0H7.4L3.7 4Z" fill="#666"/></svg>
<div class="r" style="left:369.3px;top:237.0px;width:7.4px;height:7.4px;border-radius:50%;background:#01b5a6"></div>
<div class="t" style="left:384.50px;top:233.70px;font-size:14.4px;color:#4d4d4d;font-weight:normal;font-style:normal;">Valid</div>
<div class="t" style="left:485.00px;width:60px;text-align:right;top:234.00px;font-size:13.8px;color:#4d4d4d;font-weight:normal;font-style:normal;">100%</div>
<div class="r" style="left:369.3px;top:256.8px;width:7.4px;height:7.4px;border-radius:50%;background:#fd625e"></div>
<div class="t" style="left:384.50px;top:253.50px;font-size:14.4px;color:#4d4d4d;font-weight:normal;font-style:normal;">Error</div>
<div class="t" style="left:485.00px;width:60px;text-align:right;top:253.80px;font-size:13.8px;color:#4d4d4d;font-weight:normal;font-style:normal;">0%</div>
<div class="r" style="left:369.3px;top:276.6px;width:7.4px;height:7.4px;border-radius:50%;background:#5f5f5f"></div>
<div class="t" style="left:384.50px;top:273.30px;font-size:14.4px;color:#4d4d4d;font-weight:normal;font-style:normal;">Empty</div>
<div class="t" style="left:485.00px;width:60px;text-align:right;top:273.60px;font-size:13.8px;color:#4d4d4d;font-weight:normal;font-style:normal;">0%</div>
<svg class="r" style="left:559.3px;top:196px" width="24" height="22" viewBox="0 0 24 22"><g font-family="Liberation Sans" font-size="11" fill="#555"><text x="0.8" y="16">A</text><text x="7.2" y="11.3" font-size="10.5">B</text><text x="11.6" y="18.4">C</text></g></svg>
<div class="t" style="left:585.80px;top:201.90px;font-size:12.8px;color:#333;font-weight:bold;font-style:normal;">name</div>
<div class="r" style="left:730.3px;top:198px;width:19px;height:18.8px;background:#fff;border:1px solid #a8a8a8;box-sizing:border-box"></div>
<svg class="r" style="left:735.7px;top:205.3px;" width="7.4" height="4" viewBox="0 0 7.4 4"><path d="M0 0H7.4L3.7 4Z" fill="#666"/></svg>
<div class="r" style="left:566.1px;top:237.0px;width:7.4px;height:7.4px;border-radius:50%;background:#01b5a6"></div>
<div class="t" style="left:581.30px;top:233.70px;font-size:14.4px;color:#4d4d4d;font-weight:normal;font-style:normal;">Valid</div>
<div class="t" style="left:682.20px;width:60px;text-align:right;top:234.00px;font-size:13.8px;color:#4d4d4d;font-weight:normal;font-style:normal;">100%</div>
<div class="r" style="left:566.1px;top:256.8px;width:7.4px;height:7.4px;border-radius:50%;background:#fd625e"></div>
<div class="t" style="left:581.30px;top:253.50px;font-size:14.4px;color:#4d4d4d;font-weight:normal;font-style:normal;">Error</div>
<div class="t" style="left:682.20px;width:60px;text-align:right;top:253.80px;font-size:13.8px;color:#4d4d4d;font-weight:normal;font-style:normal;">0%</div>
<div class="r" style="left:566.1px;top:276.6px;width:7.4px;height:7.4px;border-radius:50%;background:#5f5f5f"></div>
<div class="t" style="left:581.30px;top:273.30px;font-size:14.4px;color:#4d4d4d;font-weight:normal;font-style:normal;">Empty</div>
<div class="t" style="left:682.20px;width:60px;text-align:right;top:273.60px;font-size:13.8px;color:#4d4d4d;font-weight:normal;font-style:normal;">0%</div>
<svg class="r" style="left:756.5px;top:196px" width="24" height="22" viewBox="0 0 24 22"><g font-family="Liberation Sans" font-size="11" fill="#555"><text x="-0.9" y="18" font-size="12.2">1</text><text x="6.6" y="11.3" font-size="11.2">2</text><text x="12" y="18.6" font-size="11.6">3</text></g></svg>
<div class="t" style="left:783.00px;top:201.90px;font-size:12.8px;color:#333;font-weight:bold;font-style:normal;">Year</div>
<div class="r" style="left:927.4px;top:198px;width:19px;height:18.8px;background:#fff;border:1px solid #a8a8a8;box-sizing:border-box"></div>
<svg class="r" style="left:932.8000000000001px;top:205.3px;" width="7.4" height="4" viewBox="0 0 7.4 4"><path d="M0 0H7.4L3.7 4Z" fill="#666"/></svg>
<div class="r" style="left:763.3px;top:237.0px;width:7.4px;height:7.4px;border-radius:50%;background:#01b5a6"></div>
<div class="t" style="left:778.50px;top:233.70px;font-size:14.4px;color:#4d4d4d;font-weight:normal;font-style:normal;">Valid</div>
<div class="t" style="left:879.30px;width:60px;text-align:right;top:234.00px;font-size:13.8px;color:#4d4d4d;font-weight:normal;font-style:normal;">100%</div>
<div class="r" style="left:763.3px;top:256.8px;width:7.4px;height:7.4px;border-radius:50%;background:#fd625e"></div>
<div class="t" style="left:778.50px;top:253.50px;font-size:14.4px;color:#4d4d4d;font-weight:normal;font-style:normal;">Error</div>
<div class="t" style="left:879.30px;width:60px;text-align:right;top:253.80px;font-size:13.8px;color:#4d4d4d;font-weight:normal;font-style:normal;">0%</div>
<div class="r" style="left:763.3px;top:276.6px;width:7.4px;height:7.4px;border-radius:50%;background:#5f5f5f"></div>
<div class="t" style="left:778.50px;top:273.30px;font-size:14.4px;color:#4d4d4d;font-weight:normal;font-style:normal;">Empty</div>
<div class="t" style="left:879.30px;width:60px;text-align:right;top:273.60px;font-size:13.8px;color:#4d4d4d;font-weight:normal;font-style:normal;">0%</div>
<svg class="r" style="left:953.6px;top:196px" width="24" height="22" viewBox="0 0 24 22"><g font-family="Liberation Sans" font-size="11" fill="#555"><text x="-0.9" y="18" font-size="12.2">1</text><text x="6.6" y="11.3" font-size="11.2">2</text><text x="12" y="18.6" font-size="11.6">3</text></g></svg>
<div class="t" style="left:980.10px;top:201.90px;font-size:12.8px;color:#333;font-weight:bold;font-style:normal;">Population</div>
<div class="r" style="left:1124.3px;top:198px;width:19px;height:18.8px;background:#fff;border:1px solid #a8a8a8;box-sizing:border-box"></div>
<svg class="r" style="left:1129.7px;top:205.3px;" width="7.4" height="4" viewBox="0 0 7.4 4"><path d="M0 0H7.4L3.7 4Z" fill="#666"/></svg>
<div class="r" style="left:960.4px;top:237.0px;width:7.4px;height:7.4px;border-radius:50%;background:#01b5a6"></div>
<div class="t" style="left:975.60px;top:233.70px;font-size:14.4px;color:#4d4d4d;font-weight:normal;font-style:normal;">Valid</div>
<div class="t" style="left:1076.20px;width:60px;text-align:right;top:234.00px;font-size:13.8px;color:#4d4d4d;font-weight:normal;font-style:normal;">100%</div>
<div class="r" style="left:960.4px;top:256.8px;width:7.4px;height:7.4px;border-radius:50%;background:#fd625e"></div>
<div class="t" style="left:975.60px;top:253.50px;font-size:14.4px;color:#4d4d4d;font-weight:normal;font-style:normal;">Error</div>
<div class="t" style="left:1076.20px;width:60px;text-align:right;top:253.80px;font-size:13.8px;color:#4d4d4d;font-weight:normal;font-style:normal;">0%</div>
<div class="r" style="left:960.4px;top:276.6px;width:7.4px;height:7.4px;border-radius:50%;background:#5f5f5f"></div>
<div class="t" style="left:975.60px;top:273.30px;font-size:14.4px;color:#4d4d4d;font-weight:normal;font-style:normal;">Empty</div>
<div class="t" style="left:1076.20px;width:60px;text-align:right;top:273.60px;font-size:13.8px;color:#4d4d4d;font-weight:normal;font-style:normal;">0%</div>
<div class="t" style="left:323.70px;width:34px;text-align:center;top:301.62px;font-size:14.2px;color:#4a4a4a;font-weight:normal;font-style:normal;">1</div>
<div class="t" style="left:363.50px;top:301.37px;font-size:13.5px;color:#3a3a3a;font-weight:normal;font-style:normal;">2010-population.xlsx</div>
<div class="t" style="left:560.30px;top:301.42px;font-size:13.4px;color:#3a3a3a;font-weight:normal;font-style:normal;">Alabama</div>
<div class="t" style="left:845.00px;width:100px;text-align:right;top:301.47px;font-size:13.3px;color:#474747;font-weight:normal;font-style:italic;">2010</div>
<div class="t" style="left:1042.00px;width:100px;text-align:right;top:301.47px;font-size:13.3px;color:#474747;font-weight:normal;font-style:italic;">4785492</div>
<div class="t" style="left:323.70px;width:34px;text-align:center;top:327.46px;font-size:14.2px;color:#4a4a4a;font-weight:normal;font-style:normal;">2</div>
<div class="t" style="left:363.50px;top:327.21px;font-size:13.5px;color:#3a3a3a;font-weight:normal;font-style:normal;">2010-population.xlsx</div>
<div class="t" style="left:560.30px;top:327.26px;font-size:13.4px;color:#3a3a3a;font-weight:normal;font-style:normal;">Alaska</div>
<div class="t" style="left:845.00px;width:100px;text-align:right;top:327.31px;font-size:13.3px;color:#474747;font-weight:normal;font-style:italic;">2010</div>
<div class="t" style="left:1042.00px;width:100px;text-align:right;top:327.31px;font-size:13.3px;color:#474747;font-weight:normal;font-style:italic;">714031</div>
<div class="t" style="left:323.70px;width:34px;text-align:center;top:353.30px;font-size:14.2px;color:#4a4a4a;font-weight:normal;font-style:normal;">3</div>
<div class="t" style="left:363.50px;top:353.05px;font-size:13.5px;color:#3a3a3a;font-weight:normal;font-style:normal;">2010-population.xlsx</div>
<div class="t" style="left:560.30px;top:353.10px;font-size:13.4px;color:#3a3a3a;font-weight:normal;font-style:normal;">Arizona</div>
<div class="t" style="left:845.00px;width:100px;text-align:right;top:353.15px;font-size:13.3px;color:#474747;font-weight:normal;font-style:italic;">2010</div>
<div class="t" style="left:1042.00px;width:100px;text-align:right;top:353.15px;font-size:13.3px;color:#474747;font-weight:normal;font-style:italic;">6408312</div>
<div class="t" style="left:323.70px;width:34px;text-align:center;top:379.14px;font-size:14.2px;color:#4a4a4a;font-weight:normal;font-style:normal;">4</div>
<div class="t" style="left:363.50px;top:378.89px;font-size:13.5px;color:#3a3a3a;font-weight:normal;font-style:normal;">2010-population.xlsx</div>
<div class="t" style="left:560.30px;top:378.94px;font-size:13.4px;color:#3a3a3a;font-weight:normal;font-style:normal;">Arkansas</div>
<div class="t" style="left:845.00px;width:100px;text-align:right;top:378.99px;font-size:13.3px;color:#474747;font-weight:normal;font-style:italic;">2010</div>
<div class="t" style="left:1042.00px;width:100px;text-align:right;top:378.99px;font-size:13.3px;color:#474747;font-weight:normal;font-style:italic;">2921995</div>
<div class="t" style="left:323.70px;width:34px;text-align:center;top:404.98px;font-size:14.2px;color:#4a4a4a;font-weight:normal;font-style:normal;">5</div>
<div class="t" style="left:363.50px;top:404.73px;font-size:13.5px;color:#3a3a3a;font-weight:normal;font-style:normal;">2010-population.xlsx</div>
<div class="t" style="left:560.30px;top:404.78px;font-size:13.4px;color:#3a3a3a;font-weight:normal;font-style:normal;">California</div>
<div class="t" style="left:845.00px;width:100px;text-align:right;top:404.83px;font-size:13.3px;color:#474747;font-weight:normal;font-style:italic;">2010</div>
<div class="t" style="left:1042.00px;width:100px;text-align:right;top:404.83px;font-size:13.3px;color:#474747;font-weight:normal;font-style:italic;">37332685</div>
<div class="t" style="left:323.70px;width:34px;text-align:center;top:430.82px;font-size:14.2px;color:#4a4a4a;font-weight:normal;font-style:normal;">6</div>
<div class="t" style="left:363.50px;top:430.57px;font-size:13.5px;color:#3a3a3a;font-weight:normal;font-style:normal;">2010-population.xlsx</div>
<div class="t" style="left:560.30px;top:430.62px;font-size:13.4px;color:#3a3a3a;font-weight:normal;font-style:normal;">Colorado</div>
<div class="t" style="left:845.00px;width:100px;text-align:right;top:430.67px;font-size:13.3px;color:#474747;font-weight:normal;font-style:italic;">2010</div>
<div class="t" style="left:1042.00px;width:100px;text-align:right;top:430.67px;font-size:13.3px;color:#474747;font-weight:normal;font-style:italic;">5048644</div>
<div class="t" style="left:323.70px;width:34px;text-align:center;top:456.66px;font-size:14.2px;color:#4a4a4a;font-weight:normal;font-style:normal;">7</div>
<div class="t" style="left:363.50px;top:456.41px;font-size:13.5px;color:#3a3a3a;font-weight:normal;font-style:normal;">2010-population.xlsx</div>
<div class="t" style="left:560.30px;top:456.46px;font-size:13.4px;color:#3a3a3a;font-weight:normal;font-style:normal;">Connecticut</div>
<div class="t" style="left:845.00px;width:100px;text-align:right;top:456.51px;font-size:13.3px;color:#474747;font-weight:normal;font-style:italic;">2010</div>
<div class="t" style="left:1042.00px;width:100px;text-align:right;top:456.51px;font-size:13.3px;color:#474747;font-weight:normal;font-style:italic;">3579899</div>
<div class="t" style="left:323.70px;width:34px;text-align:center;top:482.50px;font-size:14.2px;color:#4a4a4a;font-weight:normal;font-style:normal;">8</div>
<div class="t" style="left:363.50px;top:482.25px;font-size:13.5px;color:#3a3a3a;font-weight:normal;font-style:normal;">2010-population.xlsx</div>
<div class="t" style="left:560.30px;top:482.30px;font-size:13.4px;color:#3a3a3a;font-weight:normal;font-style:normal;">Delaware</div>
<div class="t" style="left:845.00px;width:100px;text-align:right;top:482.35px;font-size:13.3px;color:#474747;font-weight:normal;font-style:italic;">2010</div>
<div class="t" style="left:1042.00px;width:100px;text-align:right;top:482.35px;font-size:13.3px;color:#474747;font-weight:normal;font-style:italic;">899816</div>
<div class="t" style="left:323.70px;width:34px;text-align:center;top:508.34px;font-size:14.2px;color:#4a4a4a;font-weight:normal;font-style:normal;">9</div>
<div class="t" style="left:363.50px;top:508.09px;font-size:13.5px;color:#3a3a3a;font-weight:normal;font-style:normal;">2010-population.xlsx</div>
<div class="t" style="left:560.30px;top:508.14px;font-size:13.4px;color:#3a3a3a;font-weight:normal;font-style:normal;">District of Columbia</div>
<div class="t" style="left:845.00px;width:100px;text-align:right;top:508.19px;font-size:13.3px;color:#474747;font-weight:normal;font-style:italic;">2010</div>
<div class="t" style="left:1042.00px;width:100px;text-align:right;top:508.19px;font-size:13.3px;color:#474747;font-weight:normal;font-style:italic;">605183</div>
<div class="t" style="left:323.70px;width:34px;text-align:center;top:534.18px;font-size:14.2px;color:#4a4a4a;font-weight:normal;font-style:normal;">10</div>
<div class="t" style="left:363.50px;top:533.93px;font-size:13.5px;color:#3a3a3a;font-weight:normal;font-style:normal;">2010-population.xlsx</div>
<div class="t" style="left:560.30px;top:533.98px;font-size:13.4px;color:#3a3a3a;font-weight:normal;font-style:normal;">Florida</div>
<div class="t" style="left:845.00px;width:100px;text-align:right;top:534.03px;font-size:13.3px;color:#474747;font-weight:normal;font-style:italic;">2010</div>
<div class="t" style="left:1042.00px;width:100px;text-align:right;top:534.03px;font-size:13.3px;color:#474747;font-weight:normal;font-style:italic;">18849098</div>
<div class="t" style="left:323.70px;width:34px;text-align:center;top:560.02px;font-size:14.2px;color:#4a4a4a;font-weight:normal;font-style:normal;">11</div>
<div class="t" style="left:363.50px;top:559.77px;font-size:13.5px;color:#3a3a3a;font-weight:normal;font-style:normal;">2010-population.xlsx</div>
<div class="t" style="left:560.30px;top:559.82px;font-size:13.4px;color:#3a3a3a;font-weight:normal;font-style:normal;">Georgia</div>
<div class="t" style="left:845.00px;width:100px;text-align:right;top:559.87px;font-size:13.3px;color:#474747;font-weight:normal;font-style:italic;">2010</div>
<div class="t" style="left:1042.00px;width:100px;text-align:right;top:559.87px;font-size:13.3px;color:#474747;font-weight:normal;font-style:italic;">9713521</div>
<div class="t" style="left:323.70px;width:34px;text-align:center;top:585.86px;font-size:14.2px;color:#4a4a4a;font-weight:normal;font-style:normal;">12</div>
<div class="t" style="left:363.50px;top:585.61px;font-size:13.5px;color:#3a3a3a;font-weight:normal;font-style:normal;">2010-population.xlsx</div>
<div class="t" style="left:560.30px;top:585.66px;font-size:13.4px;color:#3a3a3a;font-weight:normal;font-style:normal;">Hawaii</div>
<div class="t" style="left:845.00px;width:100px;text-align:right;top:585.71px;font-size:13.3px;color:#474747;font-weight:normal;font-style:italic;">2010</div>
<div class="t" style="left:1042.00px;width:100px;text-align:right;top:585.71px;font-size:13.3px;color:#474747;font-weight:normal;font-style:italic;">1363945</div>
<div class="t" style="left:323.70px;width:34px;text-align:center;top:611.70px;font-size:14.2px;color:#4a4a4a;font-weight:normal;font-style:normal;">13</div>
<div class="t" style="left:363.50px;top:611.45px;font-size:13.5px;color:#3a3a3a;font-weight:normal;font-style:normal;">2010-population.xlsx</div>
<div class="t" style="left:560.30px;top:611.50px;font-size:13.4px;color:#3a3a3a;font-weight:normal;font-style:normal;">Idaho</div>
<div class="t" style="left:845.00px;width:100px;text-align:right;top:611.55px;font-size:13.3px;color:#474747;font-weight:normal;font-style:italic;">2010</div>
<div class="t" style="left:1042.00px;width:100px;text-align:right;top:611.55px;font-size:13.3px;color:#474747;font-weight:normal;font-style:italic;">1571010</div>
<div class="t" style="left:323.70px;width:34px;text-align:center;top:637.54px;font-size:14.2px;color:#4a4a4a;font-weight:normal;font-style:normal;">14</div>
<div class="t" style="left:363.50px;top:637.29px;font-size:13.5px;color:#3a3a3a;font-weight:normal;font-style:normal;">2010-population.xlsx</div>
<div class="t" style="left:560.30px;top:637.34px;font-size:13.4px;color:#3a3a3a;font-weight:normal;font-style:normal;">Illinois</div>
<div class="t" style="left:845.00px;width:100px;text-align:right;top:637.39px;font-size:13.3px;color:#474747;font-weight:normal;font-style:italic;">2010</div>
<div class="t" style="left:1042.00px;width:100px;text-align:right;top:637.39px;font-size:13.3px;color:#474747;font-weight:normal;font-style:italic;">12841578</div>
<div class="t" style="left:323.70px;width:34px;text-align:center;top:663.38px;font-size:14.2px;color:#4a4a4a;font-weight:normal;font-style:normal;">15</div>
<div class="t" style="left:363.50px;top:663.13px;font-size:13.5px;color:#3a3a3a;font-weight:normal;font-style:normal;">2010-population.xlsx</div>
<div class="t" style="left:560.30px;top:663.18px;font-size:13.4px;color:#3a3a3a;font-weight:normal;font-style:normal;">Indiana</div>
<div class="t" style="left:845.00px;width:100px;text-align:right;top:663.23px;font-size:13.3px;color:#474747;font-weight:normal;font-style:italic;">2010</div>
<div class="t" style="left:1042.00px;width:100px;text-align:right;top:663.23px;font-size:13.3px;color:#474747;font-weight:normal;font-style:italic;">6490528</div>
<div class="t" style="left:323.70px;width:34px;text-align:center;top:689.22px;font-size:14.2px;color:#4a4a4a;font-weight:normal;font-style:normal;">16</div>
<div class="t" style="left:363.50px;top:688.97px;font-size:13.5px;color:#3a3a3a;font-weight:normal;font-style:normal;">2010-population.xlsx</div>
<div class="t" style="left:560.30px;top:689.02px;font-size:13.4px;color:#3a3a3a;font-weight:normal;font-style:normal;">Iowa</div>
<div class="t" style="left:845.00px;width:100px;text-align:right;top:689.07px;font-size:13.3px;color:#474747;font-weight:normal;font-style:italic;">2010</div>
<div class="t" style="left:1042.00px;width:100px;text-align:right;top:689.07px;font-size:13.3px;color:#474747;font-weight:normal;font-style:italic;">3050738</div>
<div class="t" style="left:323.70px;width:34px;text-align:center;top:715.06px;font-size:14.2px;color:#4a4a4a;font-weight:normal;font-style:normal;">17</div>
<div class="t" style="left:363.50px;top:714.81px;font-size:13.5px;color:#3a3a3a;font-weight:normal;font-style:normal;">2010-population.xlsx</div>
<div class="t" style="left:560.30px;top:714.86px;font-size:13.4px;color:#3a3a3a;font-weight:normal;font-style:normal;">Kansas</div>
<div class="t" style="left:845.00px;width:100px;text-align:right;top:714.91px;font-size:13.3px;color:#474747;font-weight:normal;font-style:italic;">2010</div>
<div class="t" style="left:1042.00px;width:100px;text-align:right;top:714.91px;font-size:13.3px;color:#474747;font-weight:normal;font-style:italic;">2858850</div>
<div class="t" style="left:323.70px;width:34px;text-align:center;top:740.90px;font-size:14.2px;color:#4a4a4a;font-weight:normal;font-style:normal;">18</div>
<div class="t" style="left:363.50px;top:740.65px;font-size:13.5px;color:#3a3a3a;font-weight:normal;font-style:normal;">2010-population.xlsx</div>
<div class="t" style="left:560.30px;top:740.70px;font-size:13.4px;color:#3a3a3a;font-weight:normal;font-style:normal;">Kentucky</div>
<div class="t" style="left:845.00px;width:100px;text-align:right;top:740.75px;font-size:13.3px;color:#474747;font-weight:normal;font-style:italic;">2010</div>
<div class="t" style="left:1042.00px;width:100px;text-align:right;top:740.75px;font-size:13.3px;color:#474747;font-weight:normal;font-style:italic;">4348662</div>
<div class="t" style="left:323.70px;width:34px;text-align:center;top:766.74px;font-size:14.2px;color:#4a4a4a;font-weight:normal;font-style:normal;">19</div>
<div class="t" style="left:363.50px;top:766.49px;font-size:13.5px;color:#3a3a3a;font-weight:normal;font-style:normal;">2010-population.xlsx</div>
<div class="t" style="left:560.30px;top:766.54px;font-size:13.4px;color:#3a3a3a;font-weight:normal;font-style:normal;">Louisiana</div>
<div class="t" style="left:845.00px;width:100px;text-align:right;top:766.59px;font-size:13.3px;color:#474747;font-weight:normal;font-style:italic;">2010</div>
<div class="t" style="left:1042.00px;width:100px;text-align:right;top:766.59px;font-size:13.3px;color:#474747;font-weight:normal;font-style:italic;">4544996</div>
<div class="t" style="left:323.70px;width:34px;text-align:center;top:792.58px;font-size:14.2px;color:#4a4a4a;font-weight:normal;font-style:normal;">20</div>
<div class="t" style="left:363.50px;top:792.33px;font-size:13.5px;color:#3a3a3a;font-weight:normal;font-style:normal;">2010-population.xlsx</div>
<div class="t" style="left:560.30px;top:792.38px;font-size:13.4px;color:#3a3a3a;font-weight:normal;font-style:normal;">Maine</div>
<div class="t" style="left:845.00px;width:100px;text-align:right;top:792.43px;font-size:13.3px;color:#474747;font-weight:normal;font-style:italic;">2010</div>
<div class="t" style="left:1042.00px;width:100px;text-align:right;top:792.43px;font-size:13.3px;color:#474747;font-weight:normal;font-style:italic;">1327730</div>
<div class="t" style="left:323.70px;width:34px;text-align:center;top:818.42px;font-size:14.2px;color:#4a4a4a;font-weight:normal;font-style:normal;">21</div>
<div class="t" style="left:363.50px;top:818.17px;font-size:13.5px;color:#3a3a3a;font-weight:normal;font-style:normal;">2010-population.xlsx</div>
<div class="t" style="left:560.30px;top:818.22px;font-size:13.4px;color:#3a3a3a;font-weight:normal;font-style:normal;">Maryland</div>
<div class="t" style="left:845.00px;width:100px;text-align:right;top:818.27px;font-size:13.3px;color:#474747;font-weight:normal;font-style:italic;">2010</div>
<div class="t" style="left:1042.00px;width:100px;text-align:right;top:818.27px;font-size:13.3px;color:#474747;font-weight:normal;font-style:italic;">5788584</div>
<div class="t" style="left:323.70px;width:34px;text-align:center;top:844.26px;font-size:14.2px;color:#4a4a4a;font-weight:normal;font-style:normal;">22</div>
<div class="t" style="left:363.50px;top:844.01px;font-size:13.5px;color:#3a3a3a;font-weight:normal;font-style:normal;">2010-population.xlsx</div>
<div class="t" style="left:560.30px;top:844.06px;font-size:13.4px;color:#3a3a3a;font-weight:normal;font-style:normal;">Massachusetts</div>
<div class="t" style="left:845.00px;width:100px;text-align:right;top:844.11px;font-size:13.3px;color:#474747;font-weight:normal;font-style:italic;">2010</div>
<div class="t" style="left:1042.00px;width:100px;text-align:right;top:844.11px;font-size:13.3px;color:#474747;font-weight:normal;font-style:italic;">6565524</div>
<div class="t" style="left:323.70px;width:34px;text-align:center;top:870.10px;font-size:14.2px;color:#4a4a4a;font-weight:normal;font-style:normal;">23</div>
<div class="t" style="left:363.50px;top:869.85px;font-size:13.5px;color:#3a3a3a;font-weight:normal;font-style:normal;">2010-population.xlsx</div>
<div class="t" style="left:560.30px;top:869.90px;font-size:13.4px;color:#3a3a3a;font-weight:normal;font-style:normal;">Michigan</div>
<div class="t" style="left:845.00px;width:100px;text-align:right;top:869.95px;font-size:13.3px;color:#474747;font-weight:normal;font-style:italic;">2010</div>
<div class="t" style="left:1042.00px;width:100px;text-align:right;top:869.95px;font-size:13.3px;color:#474747;font-weight:normal;font-style:italic;">9877495</div>
<div class="t" style="left:323.70px;width:34px;text-align:center;top:895.94px;font-size:14.2px;color:#4a4a4a;font-weight:normal;font-style:normal;">24</div>
<div class="t" style="left:363.50px;top:895.69px;font-size:13.5px;color:#3a3a3a;font-weight:normal;font-style:normal;">2010-population.xlsx</div>
<div class="t" style="left:560.30px;top:895.74px;font-size:13.4px;color:#3a3a3a;font-weight:normal;font-style:normal;">Minnesota</div>
<div class="t" style="left:845.00px;width:100px;text-align:right;top:895.79px;font-size:13.3px;color:#474747;font-weight:normal;font-style:italic;">2010</div>
<div class="t" style="left:1042.00px;width:100px;text-align:right;top:895.79px;font-size:13.3px;color:#474747;font-weight:normal;font-style:italic;">5311147</div>
<div class="t" style="left:323.70px;width:34px;text-align:center;top:921.78px;font-size:14.2px;color:#4a4a4a;font-weight:normal;font-style:normal;">25</div>
<div class="t" style="left:363.50px;top:921.53px;font-size:13.5px;color:#3a3a3a;font-weight:normal;font-style:normal;">2010-population.xlsx</div>
<div class="t" style="left:560.30px;top:921.58px;font-size:13.4px;color:#3a3a3a;font-weight:normal;font-style:normal;">Mississippi</div>
<div class="t" style="left:845.00px;width:100px;text-align:right;top:921.63px;font-size:13.3px;color:#474747;font-weight:normal;font-style:italic;">2010</div>
<div class="t" style="left:1042.00px;width:100px;text-align:right;top:921.63px;font-size:13.3px;color:#474747;font-weight:normal;font-style:italic;">2970322</div>
<div class="t" style="left:323.70px;width:34px;text-align:center;top:947.62px;font-size:14.2px;color:#4a4a4a;font-weight:normal;font-style:normal;">26</div>
<div class="t" style="left:363.50px;top:947.37px;font-size:13.5px;color:#3a3a3a;font-weight:normal;font-style:normal;">2010-population.xlsx</div>
<div class="t" style="left:560.30px;top:947.42px;font-size:13.4px;color:#3a3a3a;font-weight:normal;font-style:normal;">Missouri</div>
<div class="t" style="left:845.00px;width:100px;text-align:right;top:947.47px;font-size:13.3px;color:#474747;font-weight:normal;font-style:italic;">2010</div>
<div class="t" style="left:1042.00px;width:100px;text-align:right;top:947.47px;font-size:13.3px;color:#474747;font-weight:normal;font-style:italic;">5996118</div>
<div class="t" style="left:323.70px;width:34px;text-align:center;top:973.46px;font-size:14.2px;color:#4a4a4a;font-weight:normal;font-style:normal;">27</div>
<div class="t" style="left:363.50px;top:973.21px;font-size:13.5px;color:#3a3a3a;font-weight:normal;font-style:normal;">2010-population.xlsx</div>
<div class="t" style="left:560.30px;top:973.26px;font-size:13.4px;color:#3a3a3a;font-weight:normal;font-style:normal;">Montana</div>
<div class="t" style="left:845.00px;width:100px;text-align:right;top:973.31px;font-size:13.3px;color:#474747;font-weight:normal;font-style:italic;">2010</div>
<div class="t" style="left:1042.00px;width:100px;text-align:right;top:973.31px;font-size:13.3px;color:#474747;font-weight:normal;font-style:italic;">990641</div>
<div class="r" style="left:1183.3px;top:294.8px;width:20.3px;height:701.2px;background:#f0f0f0;"></div>
<div class="r" style="left:1184px;top:336.8px;width:18.3px;height:165.7px;background:#cdcdcd;"></div>
<svg class="r" style="left:1185px;top:313px;" width="16" height="12" viewBox="0 0 16 12"><path d="M1.8 11.5 L8 5 L14.2 11.5" stroke="#5a5a5a" stroke-width="2.6" fill="none"/></svg>
<svg class="r" style="left:1185px;top:963.6px;" width="16" height="12" viewBox="0 0 16 12"><path d="M1.8 2.5 L8 9 L14.2 2.5" stroke="#5a5a5a" stroke-width="2.6" fill="none"/></svg>
<div class="r" style="left:1209.2px;top:176.5px;width:326.8px;height:819.5px;background:#ffffff;"></div>
<div class="r" style="left:1208.7px;top:176.5px;width:1.2px;height:819.5px;background:#d6d6d6;"></div>
<div class="t" style="left:1227.70px;top:202.45px;font-size:24.3px;color:#43926a;font-weight:normal;font-style:normal;letter-spacing:-0.78px">Query Settings</div>
<svg class="r" style="left:1488px;top:205px;" width="18" height="18" viewBox="0 0 18 18"><path d="M2.3 2.7 L15.3 15.2 M15.3 2.7 L2.3 15.2" stroke="#666" stroke-width="1.3"/></svg>
<svg class="r" style="left:1221px;top:254px;" width="10" height="10" viewBox="0 0 10 10"><path d="M9.4 0.6 V9.3 H0.8 Z" fill="#444"/></svg>
<div class="t" style="left:1238.75px;top:253.00px;font-size:13.2px;color:#217346;font-weight:bold;font-style:normal;">PROPERTIES</div>
<div class="t" style="left:1238.75px;top:277.70px;font-size:14.2px;color:#333;font-weight:normal;font-style:normal;">Name</div>
<div class="r" style="left:1238.5px;top:296.3px;width:267.5px;height:26px;background:#fff;border:1px solid #ababab;box-sizing:border-box"></div>
<div class="t" style="left:1245.80px;top:303.40px;font-size:14.4px;color:#505050;font-weight:normal;font-style:normal;">append-files-pq-demo-main</div>
<div class="t" style="left:1238.75px;top:335.77px;font-size:14.45px;color:#3f6fb5;font-weight:normal;font-style:normal;">All Properties</div>
<svg class="r" style="left:1221px;top:379px;" width="10" height="10" viewBox="0 0 10 10"><path d="M9.4 0.6 V9.3 H0.8 Z" fill="#444"/></svg>
<div class="t" style="left:1238.75px;top:377.57px;font-size:13.25px;color:#217346;font-weight:bold;font-style:normal;">APPLIED STEPS</div>
<div class="r" style="left:1238.3px;top:401px;width:268px;height:570px;background:#fff;border:1px solid #c6c6c6;box-sizing:border-box"></div>
<div class="r" style="left:1239.3px;top:549.6px;width:266px;height:24.2px;background:#d5efe0;"></div>
<div class="t" style="left:1264.40px;top:408.22px;font-size:14.35px;color:#3d3d3d;font-weight:normal;font-style:normal;">Source</div>
<svg class="r" style="left:1481.15px;top:406.2px" width="16" height="16" viewBox="0 0 16 16"><g fill="#ababab"><circle cx="8" cy="8" r="4.7"/><path d="M6.9 3.6 L7.3 1.4 H8.7 L9.1 3.6 Z" transform="rotate(0 8 8)"/><path d="M6.9 3.6 L7.3 1.4 H8.7 L9.1 3.6 Z" transform="rotate(45 8 8)"/><path d="M6.9 3.6 L7.3 1.4 H8.7 L9.1 3.6 Z" transform="rotate(90 8 8)"/><path d="M6.9 3.6 L7.3 1.4 H8.7 L9.1 3.6 Z" transform="rotate(135 8 8)"/><path d="M6.9 3.6 L7.3 1.4 H8.7 L9.1 3.6 Z" transform="rotate(180 8 8)"/><path d="M6.9 3.6 L7.3 1.4 H8.7 L9.1 3.6 Z" transform="rotate(225 8 8)"/><path d="M6.9 3.6 L7.3 1.4 H8.7 L9.1 3.6 Z" transform="rotate(270 8 8)"/><path d="M6.9 3.6 L7.3 1.4 H8.7 L9.1 3.6 Z" transform="rotate(315 8 8)"/></g><circle cx="8" cy="8" r="2.5" fill="#fff"/></svg>
<div class="t" style="left:1264.40px;top:432.80px;font-size:14.35px;color:#3d3d3d;font-weight:normal;font-style:normal;">Filtered Hidden Files1</div>
<svg class="r" style="left:1481.15px;top:430.8px" width="16" height="16" viewBox="0 0 16 16"><g fill="#ababab"><circle cx="8" cy="8" r="4.7"/><path d="M6.9 3.6 L7.3 1.4 H8.7 L9.1 3.6 Z" transform="rotate(0 8 8)"/><path d="M6.9 3.6 L7.3 1.4 H8.7 L9.1 3.6 Z" transform="rotate(45 8 8)"/><path d="M6.9 3.6 L7.3 1.4 H8.7 L9.1 3.6 Z" transform="rotate(90 8 8)"/><path d="M6.9 3.6 L7.3 1.4 H8.7 L9.1 3.6 Z" transform="rotate(135 8 8)"/><path d="M6.9 3.6 L7.3 1.4 H8.7 L9.1 3.6 Z" transform="rotate(180 8 8)"/><path d="M6.9 3.6 L7.3 1.4 H8.7 L9.1 3.6 Z" transform="rotate(225 8 8)"/><path d="M6.9 3.6 L7.3 1.4 H8.7 L9.1 3.6 Z" transform="rotate(270 8 8)"/><path d="M6.9 3.6 L7.3 1.4 H8.7 L9.1 3.6 Z" transform="rotate(315 8 8)"/></g><circle cx="8" cy="8" r="2.5" fill="#fff"/></svg>
<div class="t" style="left:1264.40px;top:457.38px;font-size:14.35px;color:#3d3d3d;font-weight:normal;font-style:normal;">Invoke Custom Function1</div>
<svg class="r" style="left:1481.15px;top:455.4px" width="16" height="16" viewBox="0 0 16 16"><g fill="#ababab"><circle cx="8" cy="8" r="4.7"/><path d="M6.9 3.6 L7.3 1.4 H8.7 L9.1 3.6 Z" transform="rotate(0 8 8)"/><path d="M6.9 3.6 L7.3 1.4 H8.7 L9.1 3.6 Z" transform="rotate(45 8 8)"/><path d="M6.9 3.6 L7.3 1.4 H8.7 L9.1 3.6 Z" transform="rotate(90 8 8)"/><path d="M6.9 3.6 L7.3 1.4 H8.7 L9.1 3.6 Z" transform="rotate(135 8 8)"/><path d="M6.9 3.6 L7.3 1.4 H8.7 L9.1 3.6 Z" transform="rotate(180 8 8)"/><path d="M6.9 3.6 L7.3 1.4 H8.7 L9.1 3.6 Z" transform="rotate(225 8 8)"/><path d="M6.9 3.6 L7.3 1.4 H8.7 L9.1 3.6 Z" transform="rotate(270 8 8)"/><path d="M6.9 3.6 L7.3 1.4 H8.7 L9.1 3.6 Z" transform="rotate(315 8 8)"/></g><circle cx="8" cy="8" r="2.5" fill="#fff"/></svg>
<div class="t" style="left:1264.40px;top:481.96px;font-size:14.35px;color:#3d3d3d;font-weight:normal;font-style:normal;">Renamed Columns1</div>
<div class="t" style="left:1264.40px;top:506.55px;font-size:14.35px;color:#3d3d3d;font-weight:normal;font-style:normal;">Removed Other Columns1</div>
<svg class="r" style="left:1481.15px;top:504.5px" width="16" height="16" viewBox="0 0 16 16"><g fill="#ababab"><circle cx="8" cy="8" r="4.7"/><path d="M6.9 3.6 L7.3 1.4 H8.7 L9.1 3.6 Z" transform="rotate(0 8 8)"/><path d="M6.9 3.6 L7.3 1.4 H8.7 L9.1 3.6 Z" transform="rotate(45 8 8)"/><path d="M6.9 3.6 L7.3 1.4 H8.7 L9.1 3.6 Z" transform="rotate(90 8 8)"/><path d="M6.9 3.6 L7.3 1.4 H8.7 L9.1 3.6 Z" transform="rotate(135 8 8)"/><path d="M6.9 3.6 L7.3 1.4 H8.7 L9.1 3.6 Z" transform="rotate(180 8 8)"/><path d="M6.9 3.6 L7.3 1.4 H8.7 L9.1 3.6 Z" transform="rotate(225 8 8)"/><path d="M6.9 3.6 L7.3 1.4 H8.7 L9.1 3.6 Z" transform="rotate(270 8 8)"/><path d="M6.9 3.6 L7.3 1.4 H8.7 L9.1 3.6 Z" transform="rotate(315 8 8)"/></g><circle cx="8" cy="8" r="2.5" fill="#fff"/></svg>
<div class="t" style="left:1264.40px;top:531.12px;font-size:14.35px;color:#3d3d3d;font-weight:normal;font-style:normal;">Expanded Table Column1</div>
<div class="t" style="left:1264.40px;top:555.71px;font-size:14.35px;color:#3d3d3d;font-weight:normal;font-style:normal;">Changed Type</div>
<svg class="r" style="left:1245px;top:556.5px;" width="14" height="12" viewBox="0 0 14 12"><path d="M1.5 1.2 L11.8 10.8 M11.8 1.2 L1.5 10.8" stroke="#666" stroke-width="1.4"/></svg>
<div class="r" style="left:1534.9px;top:504.9px;width:1.2px;height:21.2px;background:#555;"></div>
<div class="r" style="left:0px;top:996px;width:1536px;height:26.5px;background:#217346;"></div>
<div class="r" style="left:0px;top:1022.5px;width:1536px;height:1.5px;background:#dfe7e2;"></div>
<div class="t" style="left:6.00px;top:1004.85px;font-size:12.7px;color:#ffffff;font-weight:normal;font-style:normal;transform:scaleY(1.12)">4 COLUMNS, 357 ROWS</div>
<div class="t" style="left:171.30px;top:1004.40px;font-size:13.6px;color:#ffffff;font-weight:normal;font-style:normal;transform:scaleY(1.06)">Column profiling based on top 1000 rows</div>
<div class="t" style="left:1229.20px;width:300px;text-align:right;top:1004.85px;font-size:12.7px;color:#ffffff;font-weight:normal;font-style:normal;transform:scaleY(1.12)">PREVIEW DOWNLOADED AT 5:14 PM</div>
<svg class="r" style="left:27.9px;top:223.4px" width="9" height="9" viewBox="0 0 9 9"><path d="M8.6 0.3 V8.4 H0.3 Z" fill="#444"/></svg>
<svg class="r" style="left:37.7px;top:253.0px" width="9" height="9" viewBox="0 0 9 9"><path d="M8.6 0.3 V8.4 H0.3 Z" fill="#444"/></svg>
<svg class="r" style="left:27.8px;top:400.0px" width="9" height="9" viewBox="0 0 9 9"><path d="M8.6 0.3 V8.4 H0.3 Z" fill="#444"/></svg>
<svg class="r" style="left:43px;top:219.6px" width="18" height="16" viewBox="0 0 18 16"><path d="M0 2.6 H10 L11.5 1 H16.5 Q17 1 17 1.6 V15 H0 Z" fill="#ecc679"/><path d="M10.5 2.2 L11.8 1.2 H16.5 V2.2 Z" fill="#f8e7c0"/></svg>
<svg class="r" style="left:52.8px;top:249px" width="18" height="16" viewBox="0 0 18 16"><path d="M0 2.6 H10 L11.5 1 H16.5 Q17 1 17 1.6 V15 H0 Z" fill="#ecc679"/><path d="M10.5 2.2 L11.8 1.2 H16.5 V2.2 Z" fill="#f8e7c0"/></svg>
<svg class="r" style="left:43px;top:397.3px" width="18" height="16" viewBox="0 0 18 16"><path d="M0 2.6 H10 L11.5 1 H16.5 Q17 1 17 1.6 V15 H0 Z" fill="#ecc679"/><path d="M10.5 2.2 L11.8 1.2 H16.5 V2.2 Z" fill="#f8e7c0"/></svg>
<svg class="r" style="left:63.5px;top:277px" width="16" height="18" viewBox="0 0 16 18">
<rect x="0.8" y="0.8" width="13.5" height="16.5" fill="#fff" stroke="#8f8f8f" stroke-width="0.9"/>
<path d="M2.2 3.3H5.5M2.2 8.9H5.5M2.2 14.5H5.5" stroke="#9a9a9a" stroke-width="0.7"/>
<rect x="6.3" y="1.8" width="6.5" height="3.5" fill="#fff" stroke="#5b8fd0" stroke-width="0.8"/>
<rect x="6.3" y="7.2" width="6.5" height="3.5" fill="#fff" stroke="#5b8fd0" stroke-width="0.8"/>
<rect x="6.3" y="12.6" width="6.5" height="3.5" fill="#fff" stroke="#5b8fd0" stroke-width="0.8"/>
</svg>
<svg class="r" style="left:63px;top:306.5px" width="17" height="19" viewBox="0 0 17 19">
<rect x="0.8" y="0.8" width="15" height="17" fill="#fff" stroke="#8f8f8f" stroke-width="0.9"/>
<path d="M3.5 4.5H13M3.5 7.2H13M3.5 9.9H13M3.5 12.6H13M3.5 15.3H13" stroke="#9a9a9a" stroke-width="0.8"/>
</svg>
<div class="t" style="left:65px;top:336.5px;font-family:'Liberation Serif',serif;font-style:italic;font-size:17px;color:#555;line-height:1">fx</div>
<svg class="r" style="left:52.8px;top:366.5px" width="17.6" height="16" viewBox="0 0 17.6 16"><rect x="0.5" y="0.5" width="16.6" height="15" fill="#fff" stroke="#9a9a9a" stroke-width="1"/><rect x="0" y="0" width="17.6" height="2.6" fill="#3f78c0"/><path d="M0.5 5.95H17.1" stroke="#9a9a9a" stroke-width="0.8"/><path d="M0.5 9.30H17.1" stroke="#9a9a9a" stroke-width="0.8"/><path d="M0.5 12.65H17.1" stroke="#9a9a9a" stroke-width="0.8"/><path d="M5.87 2.6V15.5" stroke="#9a9a9a" stroke-width="0.8"/><path d="M11.73 2.6V15.5" stroke="#9a9a9a" stroke-width="0.8"/></svg>
<svg class="r" style="left:52.8px;top:426px" width="17.6" height="16" viewBox="0 0 17.6 16"><rect x="0.5" y="0.5" width="16.6" height="15" fill="#fff" stroke="#9a9a9a" stroke-width="1"/><rect x="0" y="0" width="17.6" height="2.6" fill="#3f78c0"/><path d="M0.5 5.95H17.1" stroke="#9a9a9a" stroke-width="0.8"/><path d="M0.5 9.30H17.1" stroke="#9a9a9a" stroke-width="0.8"/><path d="M0.5 12.65H17.1" stroke="#9a9a9a" stroke-width="0.8"/><path d="M5.87 2.6V15.5" stroke="#9a9a9a" stroke-width="0.8"/><path d="M11.73 2.6V15.5" stroke="#9a9a9a" stroke-width="0.8"/></svg>
</body></html>
